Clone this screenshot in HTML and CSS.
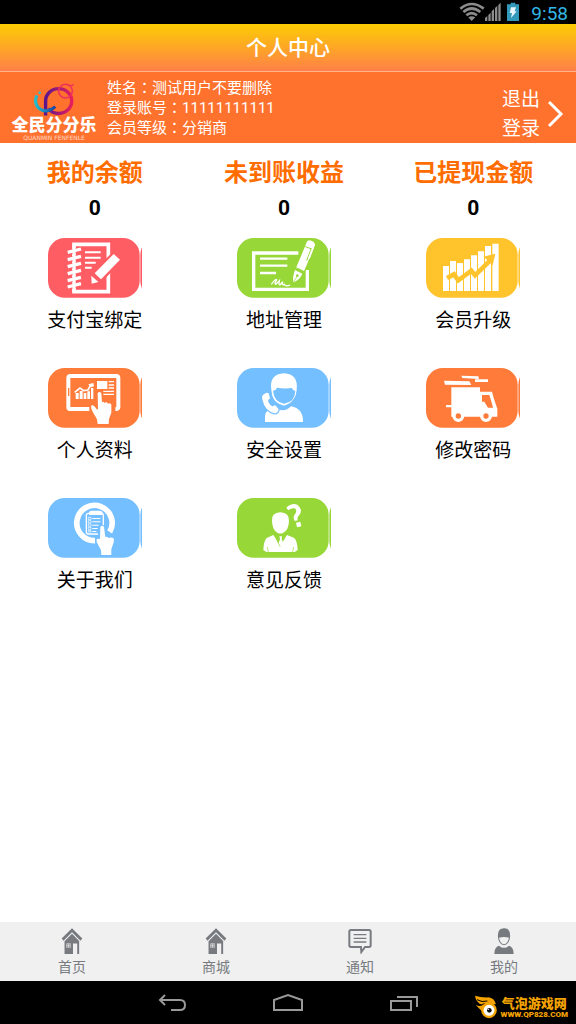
FILE: index.html
```html
<!DOCTYPE html>
<html lang="zh-CN">

<head>
    <meta charset="UTF-8">
    <meta name="viewport" content="width=device-width, initial-scale=1.0">
    <title>个人中心</title>
    <link rel="stylesheet" href="styles.css">
</head>

<body>
    <svg class="defs" aria-hidden="true">
        <!-- coloured plate behind every menu icon, with the edge of the next one showing -->
        <symbol id="plate" viewBox="0 0 282 180">
            <rect x="0" y="0" width="275" height="179" rx="50" fill="currentColor" />
            <rect x="277" y="0" width="275" height="179" rx="50" fill="currentColor" />
        </symbol>
        <symbol id="house" viewBox="0 0 64 80">
            <path d="M32 1 64 32 58 39 32 13 6 39 0 32Z" />
            <path d="M32 18 54 40v40h-6V48H35v32H9V41ZM15 48v13h13V48Z" fill-rule="evenodd" />
            <path d="M17 50h4v4h-4zM23 50h4v4h-4zM17 56h4v4h-4zM23 56h4v4h-4z" />
        </symbol>
    </svg>

    <div class="status">
        <svg width="26" height="20" viewBox="0 0 78 60" fill="none" stroke="#8c8c8c" stroke-width="8">
            <path d="M4 20Q38-8 74 20M13 30Q38 9 64 30M22 40Q38 27 54 40" />
            <path d="M28 46Q38 40 49 46L38 57Z" fill="#8c8c8c" stroke="none" />
        </svg>
        <svg width="16" height="20" viewBox="0 0 48 60" fill="#8c8c8c">
            <path d="M0 57v-9l7-6v15zM10 57V39l7-7v25zM20 57V28l7-7v36zM30 57V18l7-7v46zM40 57V9l7-7v55z" />
        </svg>
        <svg class="battery" width="12" height="20" viewBox="0 0 36 60">
            <path d="M11 2h14v5h11v50H0V7h11z" fill="#3399bb" />
            <path d="M12 16h15l-4 12h6L12 48l3-15H8z" fill="#e8f6fc" />
        </svg>
        <time class="clock">9:58</time>
    </div>

    <header class="header">
        <h1 class="title">个人中心</h1>
    </header>

    <section class="profile">
        <div class="logo">
            <svg width="44" height="33" viewBox="90 188 132 106" fill="none">
                <defs>
                    <linearGradient id="ring" x1="0" x2="1">
                        <stop offset="0" stop-color="#5b168c" />
                        <stop offset="1" stop-color="#e81e5c" />
                    </linearGradient>
                    <linearGradient id="tail" x1="0" x2="1">
                        <stop offset="0" stop-color="#20c0d0" />
                        <stop offset="1" stop-color="#1c3ea0" />
                    </linearGradient>
                </defs>
                <path d="M129 292V246A42 40 0 1 1 171 286Q150 286 138 270" stroke="url(#ring)" stroke-width="11" />
                <path d="M101 228Q90 252 107 269Q132 288 160 264" stroke="url(#tail)" stroke-width="10" />
                <circle cx="110" cy="219" r="4" fill="#20c0d0" />
                <circle cx="193" cy="214" r="22" stroke="#f0305c" stroke-width="5" />
                <path d="M197 192Q211 201 219 192" stroke="#f0305c" stroke-width="4" />
            </svg>
            <strong class="logo-name">全民分分乐</strong>
            <span class="logo-sub">QUANMIN FENFENLE</span>
        </div>
        <div class="info">
            <p>姓名<span class="colon" lang="zh-TW">：</span>测试用户不要删除</p>
            <p>登录账号<span class="colon" lang="zh-TW">：</span>11111111111</p>
            <p>会员等级<span class="colon" lang="zh-TW">：</span>分销商</p>
        </div>
        <button class="logout" type="button">
            <span>退出<br>登录</span>
            <svg width="16" height="28" viewBox="0 0 16 28" fill="none" stroke="#fff" stroke-width="3">
                <path d="M1 2 13 14 1 26" />
            </svg>
        </button>
    </section>

    <main class="main">
        <dl class="stats">
            <div class="stat">
                <dt>我的余额</dt>
                <dd>0</dd>
            </div>
            <div class="stat">
                <dt>未到账收益</dt>
                <dd>0</dd>
            </div>
            <div class="stat">
                <dt>已提现金额</dt>
                <dd>0</dd>
            </div>
        </dl>

        <nav class="menu">
            <a class="item red" href="#">
                <svg class="icon" viewBox="0 0 282 180">
                    <use href="#plate" width="282" height="180" />
                    <g transform="translate(-24 -24)" fill="none" stroke="#fff">
                        <path d="M102 43H205V185H102Z" stroke-width="11" />
                        <path d="M83 68l40-10M83 90l40-10M83 111l40-10M83 132l40-10M83 153l40-10M83 172l40-10" stroke="currentColor" stroke-width="15" />
                        <path d="M102 43V185" stroke-width="9" />
                        <path d="M83 67l40-10M83 89l40-10M83 110l40-10M83 131l40-10M83 152l40-10M83 171l40-10" stroke-width="10" />
                        <path d="M135 67H182M135 83H182M135 98H167M135 113H155" stroke-width="6" />
                        <path d="M221 72 240 89 180 154 153 161 154 136Z" fill="currentColor" stroke="currentColor" stroke-width="12" />
                        <path d="M221 72 240 89 183 148 164 130ZM154 137 175 156 155 161Z" fill="#fff" stroke="none" />
                    </g>
                </svg>
                <span>支付宝绑定</span>
            </a>
            <a class="item green" href="#">
                <svg class="icon" viewBox="0 0 282 180">
                    <use href="#plate" width="282" height="180" />
                    <g transform="translate(-21 -24)" fill="none" stroke="#fff">
                        <path d="M205 69H71V178H232V120" stroke-width="10" />
                        <path d="M90 86H172M90 107H172M90 129H138" stroke-width="7" />
                        <path d="M124 163Q137 146 140 149Q131 166 139 162L148 152Q145 167 151 164L158 155Q155 168 163 163Q166 171 181 165" stroke-width="4" />
                        <path d="M228 32 257 42 217 134 190 158 195 116Z" fill="currentColor" stroke="currentColor" stroke-width="9" />
                        <path d="M229 40Q232 28 244 32Q258 38 254 48L222 124 198 114Z" fill="#fff" stroke="none" />
                        <path d="M195 120 217 131Q211 148 190 157Q187 141 195 120Z" fill="#fff" stroke="none" />
                        <path d="M199 113 221 124M226 50 248 58M243 57 230 92" stroke="currentColor" stroke-width="3" />
                        <path d="M250 51 237 85" stroke-width="5" />
                        <circle cx="202" cy="137" r="4" fill="currentColor" stroke="none" />
                        <path d="M202 138 191 155" stroke="currentColor" stroke-width="2" />
                    </g>
                </svg>
                <span>地址管理</span>
            </a>
            <a class="item yellow" href="#">
                <svg class="icon" viewBox="0 0 282 180">
                    <use href="#plate" width="282" height="180" />
                    <g transform="translate(-21 -24)" fill="#fff">
                        <path d="M72 108h18v75H72zM93 93h18v90H93zM114 99h18v84h-18zM135 88h18v95h-18zM156 76h18v107h-18zM177 64h18v119h-18zM198 48h18v135h-18zM220 41h19v142h-19z" />
                        <path d="M84 144 105 133 118 151 157 122 168 136 217 88" fill="none" stroke="currentColor" stroke-width="14" />
                        <path d="M194 80 229 71 221 106Z" fill="currentColor" />
                    </g>
                </svg>
                <span>会员升级</span>
            </a>
            <a class="item orange" href="#">
                <svg class="icon" viewBox="0 0 282 180">
                    <use href="#plate" width="282" height="180" />
                    <g transform="translate(-24 -24)" fill="#fff">
                        <path d="M148 147H90Q85 147 85 142V54Q85 48 91 48H229Q235 48 235 54V142Q235 147 226 148" fill="none" stroke="#fff" stroke-width="12" />
                        <path d="M86 84V108" stroke="currentColor" stroke-width="4" />
                        <path d="M107 99h9v18h-9zM119 93h9v24h-9zM131 99h8v18h-8zM142 94h8v23h-8zM153 84h7v33h-7z" />
                        <path d="M104 97 120 84 131 92 144 90 152 75" fill="none" stroke="#fff" stroke-width="5" />
                        <path d="M145 73 160 69 162 79 153 82Z" />
                        <path d="M171 63h31v24h-31zM206 63h16v4h-16zM206 73h16v4h-16zM206 82h16v4h-16zM190 92h32v4h-32zM190 101h32v4h-32z" />
                        <path d="M173 99Q178 93 184 99L186 127Q190 122 194 129Q199 124 204 131Q210 128 214 134V158L207 177 206 192H173L171 178 158 155Q149 138 157 135Q165 137 170 148L174 148Z" stroke="currentColor" stroke-width="4" paint-order="stroke" />
                    </g>
                </svg>
                <span>个人资料</span>
            </a>
            <a class="item blue" href="#">
                <svg class="icon" viewBox="0 0 282 180">
                    <use href="#plate" width="282" height="180" />
                    <g transform="translate(-591 -24)" fill="#fff">
                        <path d="M694 90Q687 42 732 40Q776 42 770 91L767 106Q756 132 732 137Q706 132 697 108Z" />
                        <path d="M699 92Q710 90 710 83Q733 87 756 84Q758 92 766 93Q764 128 732 131Q702 125 699 92Z" fill="currentColor" />
                        <path d="M675 186V167Q678 147 707 141Q730 162 753 139Q790 145 789 186Z" />
                        <path d="M672 103Q679 95 686 100L690 115 684 121Q686 133 697 139L706 136 716 148Q714 160 704 160Q674 153 667 118Q664 107 672 103Z" stroke="currentColor" stroke-width="7" paint-order="stroke" />
                    </g>
                </svg>
                <span>安全设置</span>
            </a>
            <a class="item orange" href="#">
                <svg class="icon" viewBox="0 0 282 180">
                    <use href="#plate" width="282" height="180" />
                    <g transform="translate(-21 -24)" fill="#fff">
                        <path d="M75 62 151 64 157 75 78 74ZM127 47 178 49 180 57 130 54ZM168 58H207V66H168Z" />
                        <path d="M97 82H183V170H97ZM81 135H97V142H81Z" />
                        <path d="M183 95H219L224 114 235 146V170H183Z" />
                        <path d="M189 105H211L216 121 222 143H207L196 125H189Z" fill="currentColor" />
                        <circle cx="118" cy="168" r="13" fill="currentColor" stroke="#fff" stroke-width="10" />
                        <circle cx="201" cy="168" r="13" fill="currentColor" stroke="#fff" stroke-width="10" />
                    </g>
                </svg>
                <span>修改密码</span>
            </a>
            <a class="item blue" href="#">
                <svg class="icon" viewBox="0 0 282 180">
                    <use href="#plate" width="282" height="180" />
                    <g transform="translate(-24 -24)" fill="#fff">
                        <path d="M165 152A53 53 0 1 1 209 126" fill="none" stroke="#fff" stroke-width="17" />
                        <path d="M174 132H145Q139 132 139 126V76Q139 70 145 70H185Q190 70 190 76V106" fill="none" stroke="#fff" stroke-width="4" />
                        <path d="M147 75V67Q148 62 154 62H180Q186 62 187 67V75Z" />
                        <path d="M145 82h8v7h-8zM145 92h8v7h-8zM145 102h8v7h-8zM145 112h8v7h-8zM145 122h8v4h-8z" fill="none" stroke="#fff" stroke-width="2" />
                        <path d="M157 84h24v3h-24zM157 94h24v3h-24zM157 104h19v3h-19zM157 114h16v3h-16zM157 123h12v3h-12z" />
                        <path d="M181 111Q187 103 192 111L196 141Q201 138 206 144Q214 140 222 146L221 157 214 178V195H184L183 181 170 156 170 147 180 146Z" stroke="currentColor" stroke-width="4" paint-order="stroke" />
                    </g>
                </svg>
                <span>关于我们</span>
            </a>
            <a class="item green" href="#">
                <svg class="icon" viewBox="0 0 282 180">
                    <use href="#plate" width="282" height="180" />
                    <g transform="translate(-591 -24)" fill="#fff">
                        <path d="M696 94Q693 68 721 67Q749 68 747 94Q746 121 729 129Q721 132 713 129Q697 120 696 94Z" />
                        <path d="M700 135 720 161 741 135 763 144Q772 154 773 180L764 186H679L670 180Q671 154 680 144Z" />
                        <path d="M704 137 720 169 738 137 728 140H713ZM682 171l3 15M761 171l-3 15" fill="currentColor" stroke="currentColor" stroke-width="2" />
                        <path d="M718 139H726L725 147 730 159 721 169 716 159 720 147Z" />
                        <path d="M739 53Q754 38 772 44Q790 58 778 75Q769 83 774 91L764 93Q757 80 766 71Q773 58 763 55Q753 54 745 61Z" />
                        <path d="M768 98 781 95 784 109 771 112Z" />
                    </g>
                </svg>
                <span>意见反馈</span>
            </a>
        </nav>
    </main>

    <nav class="tabs">
        <a class="tab" href="#">
            <svg class="tab-icon" viewBox="0 0 78 78"><use href="#house" x="7" width="64" height="78" /></svg>
            <span>首页</span>
        </a>
        <a class="tab" href="#">
            <svg class="tab-icon" viewBox="0 0 78 78"><use href="#house" x="7" width="64" height="78" /></svg>
            <span>商城</span>
        </a>
        <a class="tab" href="#">
            <svg class="tab-icon" viewBox="0 0 78 78">
                <g fill="none" stroke="currentColor">
                    <path d="M12 6H66Q71 6 71 11V52Q71 57 66 57H54L43 72 42 57H12Q7 57 7 52V11Q7 6 12 6Z" stroke-width="6" />
                    <path d="M20 20H58M20 31H58M20 42H58" stroke-width="4" />
                </g>
            </svg>
            <span>通知</span>
        </a>
        <a class="tab" href="#">
            <svg class="tab-icon" viewBox="0 0 78 78">
                <path d="M21 29Q18 1 39 1Q60 1 57 29Q54 48 39 52Q24 48 21 29ZM24 29Q27 46 39 49Q51 46 54 29Q39 25 24 29Z" fill-rule="evenodd" />
                <path d="M10 78Q10 57 24 53Q39 66 54 53Q68 57 68 78Z" />
            </svg>
            <span>我的</span>
        </a>
    </nav>

    <footer class="system">
        <div class="keys">
            <button type="button" aria-label="返回">
                <svg width="30" height="20" viewBox="0 0 30 20" fill="none" stroke="#999" stroke-width="2">
                    <path d="M8 2 3 7 8 12M3 7H23Q28 7 28 12Q28 17 23 17H14" />
                </svg>
            </button>
            <button type="button" aria-label="主页">
                <svg width="30" height="20" viewBox="0 0 30 20" fill="none" stroke="#999" stroke-width="2">
                    <path d="M1 17V7L15 2 29 7V17Z" />
                </svg>
            </button>
            <button type="button" aria-label="最近任务">
                <svg width="30" height="20" viewBox="0 0 30 20" fill="none" stroke="#999" stroke-width="2">
                    <path d="M2 8H22V17H2ZM8 4H28V14" />
                </svg>
            </button>
        </div>
        <div class="brand">
            <svg width="24" height="24" viewBox="0 0 72 72">
                <path d="M3 2Q22 8 43 7Q61 9 66 28L45 26Q24 29 24 49L5 30Q17 36 25 31Q5 21 3 2Z" fill="#f5a300" />
                <path d="M9 14Q24 23 40 18M10 28Q23 32 32 26" fill="none" stroke="#000" stroke-width="3" />
                <circle cx="45" cy="46" r="20" fill="#fff" stroke="#f5a300" stroke-width="7" />
                <circle cx="46" cy="46" r="7" fill="#111" />
                <circle cx="43" cy="43" r="2" fill="#fff" />
            </svg>
            <div class="brand-text">
                <strong>气泡游戏网</strong>
                <span>WWW.QP828.COM</span>
            </div>
        </div>
    </footer>
</body>

</html>
```
FILE: styles.css
```css
* {
    box-sizing: border-box;
}

body {
    display: flex;
    flex-direction: column;
    min-height: 100vh;
    margin: 0;
    background-color: #fff;
    color: #000;
    font-family: Roboto, "Noto Sans CJK SC", sans-serif;
}

svg {
    display: block;
}

a {
    color: inherit;
    text-decoration: none;
}

button {
    padding: 0;
    border: 0;
    background: none;
    color: inherit;
    font: inherit;
}

.defs {
    position: absolute;
    width: 0;
    height: 0;
}

/* status bar */
.status {
    display: flex;
    justify-content: flex-end;
    align-items: flex-start;
    height: 24px;
    padding: 2px 8px 0 0;
    background-color: #000;
}

.battery {
    margin: 0 12px 0 6px;
}

.clock {
    color: #33b5e5;
    font-size: 19px;
    line-height: 24px;
}

/* header */
.header {
    height: 48px;
    border-bottom: 1px solid #ffb38a;
    background: linear-gradient(#fccc04, #ff8048);
}

.title {
    margin: 0;
    color: #fff;
    font-size: 21px;
    font-weight: 500;
    line-height: 48px;
    text-align: center;
}

.profile {
    display: flex;
    align-items: center;
    height: 71px;
    padding: 0 12px;
    background-color: #ff722e;
    color: #fff;
}

.logo {
    display: flex;
    flex-direction: column;
    align-items: center;
    width: 84px;
    margin-right: 11px;
    padding-top: 10px;
}

.logo-name {
    font-size: 17px;
    font-weight: 900;
    line-height: 18px;
    white-space: nowrap;
}

.logo-sub {
    font-family: "DejaVu Sans", sans-serif;
    font-size: 6px;
    line-height: 8px;
    opacity: .7;
    white-space: nowrap;
}

.info {
    flex: 1;
    font-size: 15px;
    line-height: 20px;
}

.info p {
    margin: 0;
}

.colon {
    font-family: "Noto Sans CJK TC", sans-serif;
    line-height: 1;
}

.logout {
    display: flex;
    align-items: center;
    gap: 8px;
    padding-top: 12px;
    font-size: 19px;
    line-height: 29px;
}

/* content */
.main {
    flex: 1;
    padding-right: 8px;
}

.stats,
.menu {
    display: grid;
    grid-template-columns: repeat(3, 1fr);
    margin: 0;
    text-align: center;
}

.stats {
    padding-top: 12px;
}

.stat dt {
    color: #ff6c00;
    font-size: 24px;
    font-weight: 700;
    line-height: 36px;
}

.stat dd {
    margin: 0;
    font-size: 21px;
    font-weight: 700;
    line-height: 34px;
}

.menu {
    row-gap: 30px;
    padding-top: 13px;
}

.item {
    display: flex;
    flex-direction: column;
    align-items: center;
    gap: 6px;
}

.item span {
    color: #000;
    font-size: 19px;
    line-height: 34px;
}

.icon {
    width: 94px;
    height: 60px;
    overflow: hidden;
}

.red {
    color: #ff5d64;
}

.green {
    color: #97d738;
}

.yellow {
    color: #ffc32c;
}

.orange {
    color: #ff7b3a;
}

.blue {
    color: #74bfff;
}

/* bottom tabs */
.tabs {
    display: flex;
    height: 59px;
    background-color: #f0f0f0;
    color: #777b80;
}

.tab {
    display: flex;
    flex: 1;
    flex-direction: column;
    align-items: center;
    padding-top: 6px;
    font-size: 14px;
    line-height: 26px;
}

.tab-icon {
    width: 26px;
    height: 26px;
    fill: currentColor;
}

/* system keys */
.system {
    position: relative;
    height: 43px;
    background-color: #000;
}

.keys {
    display: flex;
    justify-content: center;
    align-items: center;
    gap: 86px;
    height: 43px;
}

.brand {
    position: absolute;
    right: 8px;
    bottom: 5px;
    display: flex;
    align-items: center;
    gap: 2px;
    color: #f5a300;
}

.brand-text {
    display: flex;
    flex-direction: column;
    align-items: center;
}

.brand strong {
    font-size: 13px;
    font-weight: 900;
    line-height: 15px;
}

.brand span {
    font-size: 8px;
    font-weight: 900;
    line-height: 8px;
}
```
